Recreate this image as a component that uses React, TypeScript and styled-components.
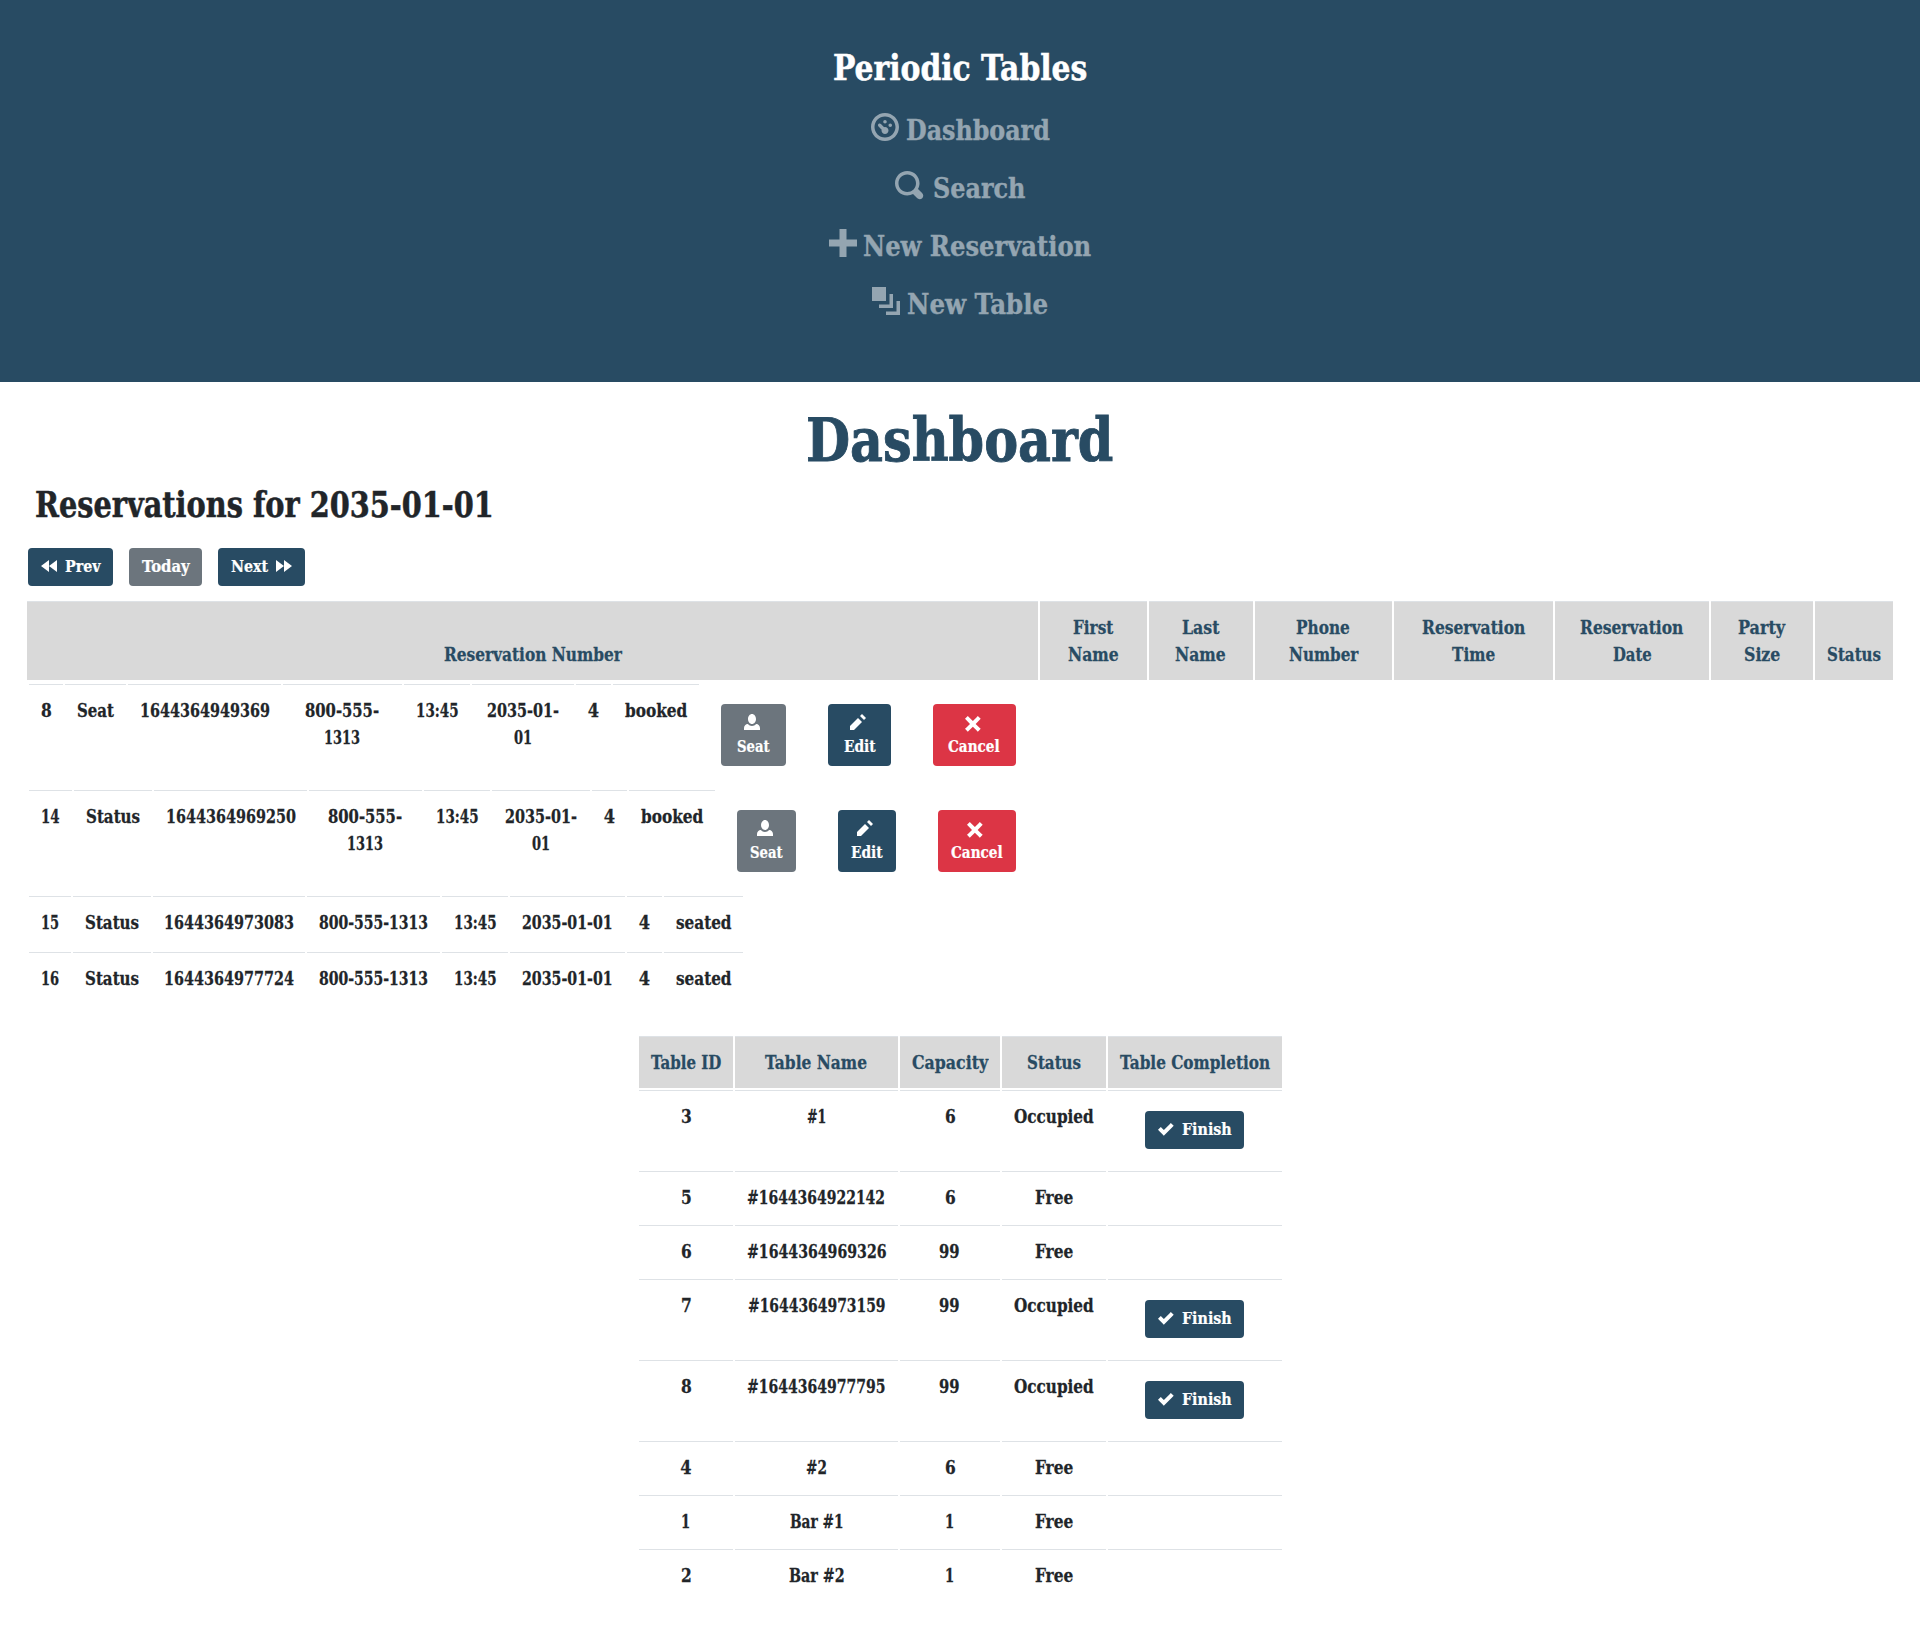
import React, { useLayoutEffect, useRef, useState } from "react";
import styled, { createGlobalStyle } from "styled-components";

const NAVY = "#284b63";
const GREY = "#6c757d";
const RED = "#dc3545";

const GlobalStyle = createGlobalStyle`
  *, *::before, *::after { box-sizing: border-box; }
  body {
    margin: 0;
    background: #fff;
    color: #212529;
    font-family: "DejaVu Serif Condensed", "DejaVu Serif", serif;
    font-stretch: condensed;
    font-size: 18px;
    line-height: 27px;
    font-weight: 700;
  }
`;

/* ---------- text set to a fixed measure ---------- */

const Measure = styled.span<{ $w: number }>`
  display: inline-block;
  flex: none;
  width: ${(p) => p.$w}px;
  white-space: nowrap;
  text-align: left;
  vertical-align: top;
`;

const Glyphs = styled.span`
  display: inline-block;
  margin-left: -0.2px;
  transform-origin: 0 50%;
  -webkit-text-stroke: 0.014em currentColor;
`;

function Fit({ w, children }: { w: number; children: string }) {
  const ref = useRef<HTMLSpanElement>(null);
  const [scale, setScale] = useState(1);
  useLayoutEffect(() => {
    if (ref.current && ref.current.offsetWidth > 0) {
      setScale(w / ref.current.offsetWidth);
    }
  }, [w, children]);
  return (
    <Measure $w={w}>
      <Glyphs ref={ref} style={{ transform: `scaleX(${scale})` }}>
        {children}
      </Glyphs>
    </Measure>
  );
}

/* ---------- icons ---------- */

const ICONS = {
  dial: "M4 0c-2.2 0-4 1.8-4 4s1.8 4 4 4 4-1.8 4-4-1.8-4-4-4zm0 1c1.66 0 3 1.34 3 3s-1.34 3-3 3-3-1.34-3-3 1.34-3 3-3zm0 1c-.28 0-.5.22-.5.5s.22.5.5.5.5-.22.5-.5-.22-.5-.5-.5zm-1.66 1a.5.5 0 0 0-.19.84l.91.91c-.02.08-.06.16-.06.25 0 .55.45 1 1 1s1-.45 1-1-.45-1-1-1c-.09 0-.17.04-.25.06l-.91-.91a.5.5 0 0 0-.44-.16.5.5 0 0 0-.06 0zm3.16 0c-.28 0-.5.22-.5.5s.22.5.5.5.5-.22.5-.5-.22-.5-.5-.5z",
  search:
    "M3.5 0c-1.93 0-3.5 1.57-3.5 3.5s1.57 3.5 3.5 3.5c.59 0 1.17-.14 1.66-.41a1 1 0 0 0 .13.13l1 1a1.02 1.02 0 1 0 1.44-1.44l-1-1a1 1 0 0 0-.16-.13c.27-.49.44-1.06.44-1.66 0-1.93-1.55-3.5-3.5-3.5zm0 1c1.39 0 2.5 1.11 2.5 2.5 0 .66-.24 1.27-.66 1.72-.01.01-.02.02-.03.03a1 1 0 0 0-.13.13c-.44.4-1.04.63-1.69.63-1.39 0-2.5-1.11-2.5-2.5s1.11-2.5 2.5-2.5z",
  plus: "M3 0v3h-3v2h3v3h2v-3h3v-2h-3v-3h-2z",
  layers: "M0 0v4h4v-4h-4zm5 2v3h-3v1h4v-4h-1zm2 2v3h-3v1h4v-4h-1z",
  back: "M4 1l-4 3 4 3v-6zm0 3l4 3v-6l-4 3z",
  forward: "M0 1v6l4-3-4-3zm4 3v3l4-3-4-3v3z",
  person:
    "M4 0c-1.1 0-2 1.12-2 2.5s.9 2.5 2 2.5 2-1.12 2-2.5-.9-2.5-2-2.5zm-2.09 5c-1.06.05-1.91.92-1.91 2v1h8v-1c0-1.08-.84-1.95-1.91-2-.54.61-1.28 1-2.09 1-.81 0-1.55-.39-2.09-1z",
  pencil: "M6 0l-1 1 2 2 1-1-2-2zm-2 2l-4 4v2h2l4-4-2-2z",
  x: "M1.41 1l-1.41 1.41.72.72 1.78 1.81-1.78 1.78-.72.69 1.41 1.44.72-.72 1.81-1.81 1.78 1.81.69.72 1.44-1.44-.72-.69-1.81-1.78 1.81-1.81.72-.72-1.44-1.41-.69.72-1.78 1.78-1.81-1.78-.72-.72z",
  check:
    "M6.41 1l-.69.72-2.78 2.78-.81-.78-.72-.72-1.41 1.41.72.72 1.5 1.5.69.72.72-.72 3.5-3.5.72-.72-1.44-1.41z",
};

const Svg = styled.svg<{ $size: number }>`
  display: block;
  flex: none;
  width: ${(p) => p.$size}px;
  height: ${(p) => p.$size}px;
  fill: currentColor;
  overflow: visible;
`;

function Icon({ name, size = 16 }: { name: keyof typeof ICONS; size?: number }) {
  return (
    <Svg $size={size} viewBox="0 0 8 8" aria-hidden="true">
      <path d={ICONS[name]} />
    </Svg>
  );
}

/* ---------- header ---------- */

const Header = styled.header`
  height: 382px;
  padding-top: 40px;
  background: ${NAVY};
  display: flex;
  flex-direction: column;
  align-items: center;
`;

const Brand = styled.div`
  color: #fff;
  font-size: 36px;
  line-height: 54px;
  margin-bottom: 16px;
`;

const Nav = styled.nav`
  display: flex;
  flex-direction: column;
  align-items: center;
  gap: 16px;
`;

const NavLink = styled.a<{ $gap: number }>`
  display: flex;
  align-items: flex-start;
  gap: ${(p) => p.$gap}px;
  color: #94a5b1;
  font-size: 28px;
  line-height: 42px;
  svg { margin-top: 3px; }
`;

/* ---------- page ---------- */

const Main = styled.main`
  padding: 22px 27px 0;
`;

const Title = styled.h1`
  margin: 0;
  color: ${NAVY};
  font-size: 60px;
  line-height: 72px;
  text-align: center;
`;

const Subtitle = styled.h2`
  margin: 8px 0 22px 8px;
  font-size: 35px;
  line-height: 42px;
  height: 42px;
`;

const Pager = styled.div`
  display: flex;
  gap: 16px;
  margin: 0 0 15px 1px;
`;

const Button = styled.button<{ $bg: string; $w: number }>`
  display: flex;
  align-items: flex-start;
  justify-content: center;
  gap: 8px;
  width: ${(p) => p.$w}px;
  height: 38px;
  padding: 7px 0 0;
  border: 0;
  border-radius: 4px;
  background: ${(p) => p.$bg};
  color: #fff;
  font: inherit;
  font-size: 16px;
  line-height: 24px;
  svg { margin-top: 3px; }
`;

const StackButton = styled(Button)`
  flex-direction: column;
  align-items: center;
  justify-content: flex-start;
  gap: 5px;
  height: 62px;
  padding-top: 10px;
  svg { margin: 0 4px 0 0; }
`;

/* ---------- grids ---------- */

const HeadRow = styled.div<{ $cols: string }>`
  display: grid;
  grid-template-columns: ${(p) => p.$cols};
  gap: 2px;
`;

const HeadCell = styled.div`
  display: flex;
  flex-direction: column;
  align-items: center;
  justify-content: flex-end;
  padding: 12px 0;
  border-top: 1px solid #dee2e6;
  background: #d9d9d9;
  color: ${NAVY};
`;

const ResBody = styled.div`
  padding: 4px 0 0 2px;
`;

const ResRow = styled.div<{ $h: number }>`
  display: flex;
  align-items: flex-start;
  gap: 2px;
  height: ${(p) => p.$h}px;
`;

const Cell = styled.div<{ $w?: number }>`
  display: flex;
  flex-direction: column;
  align-items: center;
  padding-top: 12px;
  border-top: 1px solid #dee2e6;
  ${(p) => (p.$w ? `width: ${p.$w}px;` : "")}
`;

const Actions = styled.div<{ $left: number }>`
  display: flex;
  gap: 42px;
  padding: 20px 0 0 ${(p) => p.$left}px;
`;

const Tables = styled.section`
  width: 643px;
  margin: 28px 0 0 612px;
`;

const TableHead = styled(HeadRow)`
  height: 52px;
  margin-bottom: 2px;
`;

const TableRow = styled(HeadRow)<{ $h: number }>`
  height: ${(p) => p.$h - 2}px;
  margin-bottom: 2px;
`;

const FinishSlot = styled.div`
  padding-top: 8px;
  margin-left: -1px;
`;

/* ---------- data ---------- */

type Line = [string, number];
type Col = { w: number; lines: Line[] };

const RES_COLS = "1011px 107px 104px 137px 159px 154px 102px 78px";
const RES_HEAD: Line[][] = [
  [["Reservation Number", 177.5]],
  [["First", 40.5], ["Name", 51]],
  [["Last", 37], ["Name", 51]],
  [["Phone", 54], ["Number", 69.5]],
  [["Reservation", 103.5], ["Time", 43.5]],
  [["Reservation", 103.5], ["Date", 38.5]],
  [["Party", 47.5], ["Size", 36]],
  [["Status", 54]],
];

type Res = { cols: Col[]; h: number; left?: number; btns?: number[] };

const seated = (id: string, phone: string): Res => ({
  h: 56,
  cols: [
    { w: 42, lines: [[id, 18.5]] },
    { w: 78, lines: [["Status", 54]] },
    { w: 152, lines: [[phone, 129.5]] },
    { w: 133, lines: [["800-555-1313", 109]] },
    { w: 66, lines: [["13:45", 42.5]] },
    { w: 115, lines: [["2035-01-01", 91]] },
    { w: 35, lines: [["4", 11]] },
    { w: 79, lines: [["seated", 55.5]] },
  ],
});

const RESERVATIONS: Res[] = [
  {
    h: 106,
    left: 20,
    btns: [65, 63, 83],
    cols: [
      { w: 34, lines: [["8", 10.5]] },
      { w: 61, lines: [["Seat", 37]] },
      { w: 153, lines: [["1644364949369", 129.5]] },
      { w: 119, lines: [["800-555-", 74], ["1313", 36]] },
      { w: 66, lines: [["13:45", 42.5]] },
      { w: 102, lines: [["2035-01-", 72], ["01", 18.5]] },
      { w: 35, lines: [["4", 11]] },
      { w: 86, lines: [["booked", 62.5]] },
    ],
  },
  {
    h: 106,
    left: 20,
    btns: [59, 58, 78],
    cols: [
      { w: 43, lines: [["14", 19]] },
      { w: 78, lines: [["Status", 54]] },
      { w: 153, lines: [["1644364969250", 129.5]] },
      { w: 113, lines: [["800-555-", 74], ["1313", 36]] },
      { w: 66, lines: [["13:45", 42.5]] },
      { w: 98, lines: [["2035-01-", 72], ["01", 18.5]] },
      { w: 35, lines: [["4", 11]] },
      { w: 86, lines: [["booked", 62.5]] },
    ],
  },
  seated("15", "1644364973083"),
  seated("16", "1644364977724"),
];

const TAB_COLS = "94px 163px 100px 104px 174px";
const TAB_HEAD: Line[] = [
  ["Table ID", 70.5],
  ["Table Name", 102],
  ["Capacity", 76],
  ["Status", 54],
  ["Table Completion", 150],
];
const OCC: Line = ["Occupied", 80];
const FREE: Line = ["Free", 38];
const TABLES: Line[][] = [
  [["3", 10.5], ["#1", 19.5], ["6", 10.5], OCC],
  [["5", 10.5], ["#1644364922142", 138], ["6", 10.5], FREE],
  [["6", 10.5], ["#1644364969326", 139.5], ["99", 21], FREE],
  [["7", 10.5], ["#1644364973159", 137.5], ["99", 21], OCC],
  [["8", 10.5], ["#1644364977795", 138.5], ["99", 21], OCC],
  [["4", 11], ["#2", 21], ["6", 10.5], FREE],
  [["1", 9], ["Bar #1", 53.5], ["1", 9], FREE],
  [["2", 10.5], ["Bar #2", 55.5], ["1", 9], FREE],
];

const Lines = ({ lines }: { lines: Line[] }) => (
  <>
    {lines.map(([text, w]) => (
      <Fit key={text} w={w}>
        {text}
      </Fit>
    ))}
  </>
);

export default function App() {
  return (
    <>
      <GlobalStyle />
      <Header>
        <Brand>
          <Fit w={254}>Periodic Tables</Fit>
        </Brand>
        <Nav>
          <NavLink $gap={7}>
            <Icon name="dial" size={28} />
            <Fit w={143.5}>Dashboard</Fit>
          </NavLink>
          <NavLink $gap={10}>
            <Icon name="search" size={28} />
            <Fit w={92}>Search</Fit>
          </NavLink>
          <NavLink $gap={7}>
            <Icon name="plus" size={28} />
            <Fit w={228}>New Reservation</Fit>
          </NavLink>
          <NavLink $gap={7}>
            <Icon name="layers" size={28} />
            <Fit w={141}>New Table</Fit>
          </NavLink>
        </Nav>
      </Header>
      <Main>
        <Title>
          <Fit w={307}>Dashboard</Fit>
        </Title>
        <Subtitle>
          <Fit w={459}>Reservations for 2035-01-01</Fit>
        </Subtitle>
        <Pager>
          <Button $bg={NAVY} $w={85}>
            <Icon name="back" />
            <Fit w={35.5}>Prev</Fit>
          </Button>
          <Button $bg={GREY} $w={73}>
            <Fit w={47.5}>Today</Fit>
          </Button>
          <Button $bg={NAVY} $w={87}>
            <Fit w={37.5}>Next</Fit>
            <Icon name="forward" />
          </Button>
        </Pager>
        <HeadRow $cols={RES_COLS}>
          {RES_HEAD.map((lines, i) => (
            <HeadCell key={i}>
              <Lines lines={lines} />
            </HeadCell>
          ))}
        </HeadRow>
        <ResBody>
          {RESERVATIONS.map((r, i) => (
            <ResRow key={i} $h={r.h}>
              {r.cols.map((c, j) => (
                <Cell key={j} $w={c.w}>
                  <Lines lines={c.lines} />
                </Cell>
              ))}
              {r.btns && (
                <Actions $left={r.left ?? 0}>
                  <StackButton $bg={GREY} $w={r.btns[0]}>
                    <Icon name="person" />
                    <Fit w={33}>Seat</Fit>
                  </StackButton>
                  <StackButton $bg={NAVY} $w={r.btns[1]}>
                    <Icon name="pencil" />
                    <Fit w={31.5}>Edit</Fit>
                  </StackButton>
                  <StackButton $bg={RED} $w={r.btns[2]}>
                    <Icon name="x" />
                    <Fit w={52}>Cancel</Fit>
                  </StackButton>
                </Actions>
              )}
            </ResRow>
          ))}
        </ResBody>
        <Tables>
          <TableHead $cols={TAB_COLS}>
            {TAB_HEAD.map((line) => (
              <HeadCell key={line[0]}>
                <Lines lines={[line]} />
              </HeadCell>
            ))}
          </TableHead>
          {TABLES.map((cells, i) => {
            const occupied = cells[3] === OCC;
            return (
              <TableRow key={i} $cols={TAB_COLS} $h={occupied ? 81 : 54}>
                {cells.map((line, j) => (
                  <Cell key={j}>
                    <Lines lines={[line]} />
                  </Cell>
                ))}
                <Cell>
                  {occupied && (
                    <FinishSlot>
                      <Button $bg={NAVY} $w={99}>
                        <Icon name="check" />
                        <Fit w={49.5}>Finish</Fit>
                      </Button>
                    </FinishSlot>
                  )}
                </Cell>
              </TableRow>
            );
          })}
        </Tables>
      </Main>
    </>
  );
}
